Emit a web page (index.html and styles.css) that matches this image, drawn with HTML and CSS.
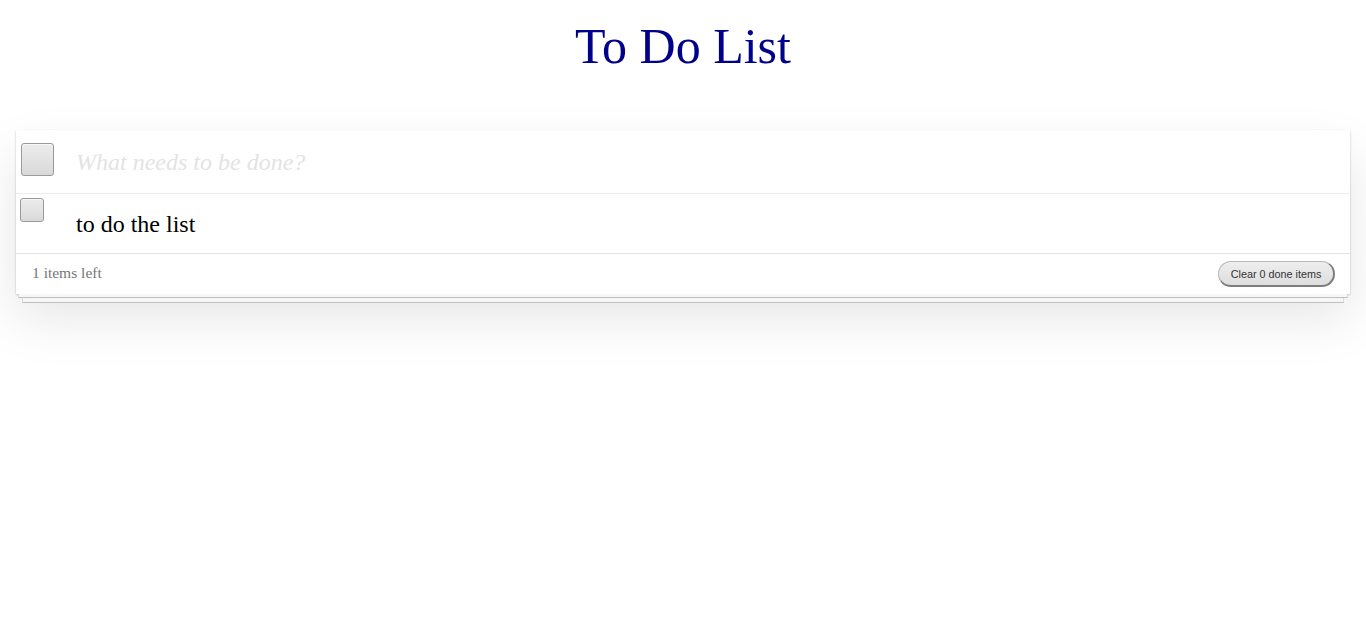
FILE: index.html
```html
<!DOCTYPE html>
<html lang="en">
<head>
<meta charset="utf-8">
<title>To Do List</title>
<link rel="stylesheet" href="styles.css">
</head>
<body>
<h1 class="title">To Do List</h1>
<section class="stack">
  <div class="card">
    <div class="new-row">
      <span class="check check-big"></span>
      <div class="placeholder">What needs to be done?</div>
    </div>
    <div class="item-row">
      <span class="check check-small"></span>
      <div class="item-text">to do the list</div>
    </div>
    <footer class="footer">
      <span class="count">1 items left</span>
      <button class="clear">Clear 0 done items</button>
    </footer>
  </div>
  <div class="paper paper-1"></div>
  <div class="paper paper-2"></div>
</section>
</body>
</html>
```

FILE: styles.css
```css
html, body {
  margin: 0;
  padding: 0;
  background: #fff;
}
body {
  min-height: 100vh;
  font-family: "Liberation Serif", "Times New Roman", serif;
  color: #000;
}
.title {
  margin: 19px 0 57px;
  font-size: 50px;
  line-height: 54px;
  font-weight: normal;
  text-align: center;
  color: #00008b;
}
.stack {
  margin: 0 16px;
  padding-bottom: 40px;
}
.card {
  background: #fff;
  box-shadow:
    0 1px 2px rgba(0,0,0,0.22),
    0 24px 50px rgba(0,0,0,0.10);
}
.paper {
  box-sizing: border-box;
  background: #f6f6f6;
  border: 1px solid rgba(0,0,0,0.10);
  border-top: 0;
  border-bottom: 1px solid rgba(0,0,0,0.22);
}
.paper-1 {
  margin: 0 2px;
  height: 4px;
}
.paper-2 {
  margin: 0 6px;
  height: 5px;
}
.new-row {
  box-sizing: border-box;
  height: 64px;
  display: flex;
  align-items: flex-start;
  padding: 13px 0 0 5px;
  border-bottom: 1px solid #ececec;
}
.check {
  box-sizing: border-box;
  display: block;
  flex: none;
  border: 1px solid #9a9a9a;
  border-radius: 3px;
  background: linear-gradient(#ececec, #d9d9d9);
  box-shadow: inset 0 1px 0 #f6f6f6;
}
.check-big {
  width: 33px;
  height: 33px;
}
.check-small {
  width: 24px;
  height: 24px;
}
.placeholder {
  margin: 7px 0 0 22px;
  font-size: 24px;
  line-height: 24px;
  font-style: italic;
  color: #e3e3e3;
}
.item-row {
  box-sizing: border-box;
  height: 59px;
  display: flex;
  align-items: flex-start;
  padding: 4px 0 0 4px;
}
.item-text {
  margin: 14px 0 0 32px;
  font-size: 24px;
  line-height: 24px;
}
.footer {
  box-sizing: border-box;
  height: 41px;
  border-top: 1px solid #e3e3e3;
  display: flex;
  align-items: flex-start;
  justify-content: space-between;
  padding: 7px 15px 0 16px;
}
.count {
  margin-top: 4px;
  font-size: 15.5px;
  line-height: 16px;
  color: #777;
}
.clear {
  box-sizing: border-box;
  width: 117px;
  height: 26px;
  padding: 0;
  border: 1px solid #b8b8b8;
  border-right: 2px solid #7d7d7d;
  border-bottom: 2px solid #7d7d7d;
  border-radius: 13px;
  background: linear-gradient(#eeeeee, #dedede);
  font-family: "Liberation Sans", Arial, sans-serif;
  font-size: 10.8px;
  color: #333;
  text-align: center;
}
```
